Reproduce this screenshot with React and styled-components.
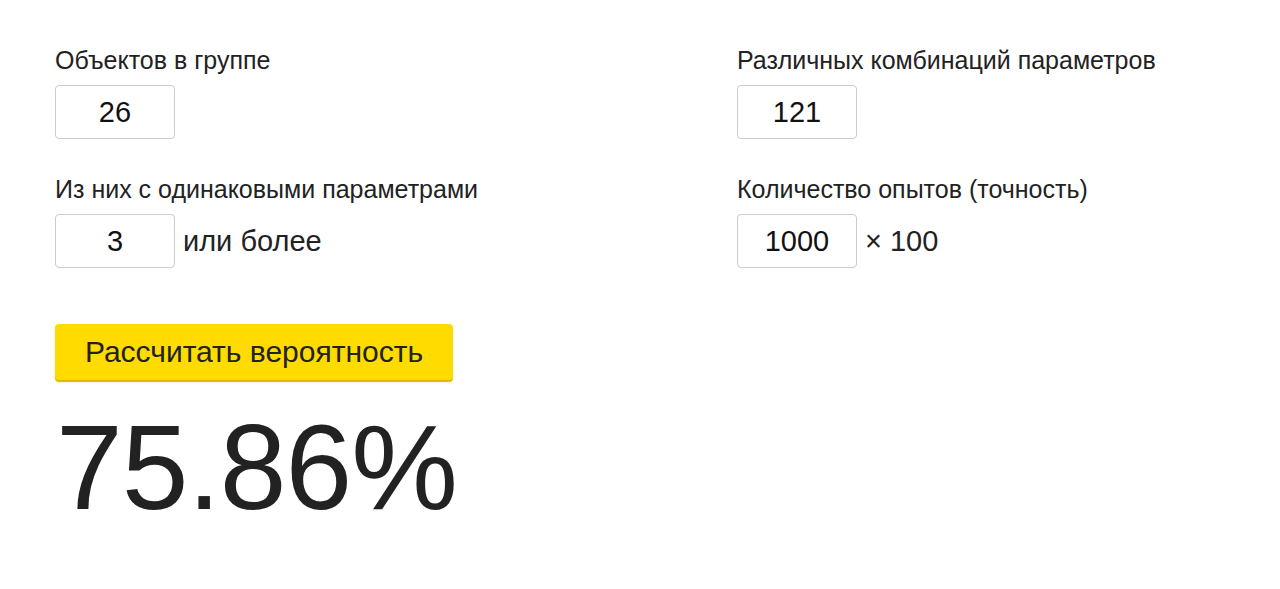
import React, { useState } from 'react';
import styled, { createGlobalStyle } from 'styled-components';

const GlobalStyle = createGlobalStyle`
  html, body {
    margin: 0;
    padding: 0;
    background: #fff;
    font-family: 'Liberation Sans', Arial, sans-serif;
    color: #222;
  }
`;

const Page = styled.div`
  padding: 45px 0 0 55px;
`;

const FieldGrid = styled.div`
  display: grid;
  grid-template-columns: 682px 1fr;
  row-gap: 35px;
`;

const Field = styled.div`
  display: flex;
  flex-direction: column;
  gap: 10px;
`;

const Label = styled.label`
  font-size: 25px;
  line-height: 30px;
  color: #222;
`;

const InputRow = styled.div`
  display: flex;
  align-items: center;
  gap: 8px;
`;

const NumberInput = styled.input`
  box-sizing: border-box;
  width: 120px;
  height: 54px;
  border: 1px solid #ccc;
  border-radius: 4px;
  font-family: 'Liberation Sans', Arial, sans-serif;
  font-size: 29px;
  color: #111;
  text-align: center;
  padding: 0;
  outline: none;
`;

const Suffix = styled.span`
  font-size: 29px;
  color: #222;
`;

const Button = styled.button`
  display: block;
  margin-top: 56px;
  box-sizing: border-box;
  width: 398px;
  height: 56px;
  border: none;
  border-radius: 4px;
  background: #ffdb00;
  box-shadow: 0 2px 1px #e0b600;
  font-family: 'Liberation Sans', Arial, sans-serif;
  font-size: 30px;
  color: #222;
  padding: 0;
  cursor: pointer;
`;

const Result = styled.div`
  margin-top: 27px;
  margin-left: 1px;
  font-size: 120px;
  line-height: 120px;
  letter-spacing: -1px;
  color: #222;
`;

const fields = [
  { label: 'Объектов в группе', value: '26' },
  { label: 'Различных комбинаций параметров', value: '121' },
  { label: 'Из них с одинаковыми параметрами', value: '3', suffix: 'или более' },
  { label: 'Количество опытов (точность)', value: '1000', suffix: '× 100' },
];

export default function App() {
  const [values, setValues] = useState(fields.map((f) => f.value));

  return (
    <>
      <GlobalStyle />
      <Page>
        <FieldGrid>
          {fields.map((f, i) => (
            <Field key={f.label}>
              <Label>{f.label}</Label>
              <InputRow>
                <NumberInput
                  value={values[i]}
                  onChange={(e) => {
                    const next = [...values];
                    next[i] = e.target.value;
                    setValues(next);
                  }}
                />
                {f.suffix && <Suffix>{f.suffix}</Suffix>}
              </InputRow>
            </Field>
          ))}
        </FieldGrid>
        <Button>Рассчитать вероятность</Button>
        <Result>75.86%</Result>
      </Page>
    </>
  );
}
